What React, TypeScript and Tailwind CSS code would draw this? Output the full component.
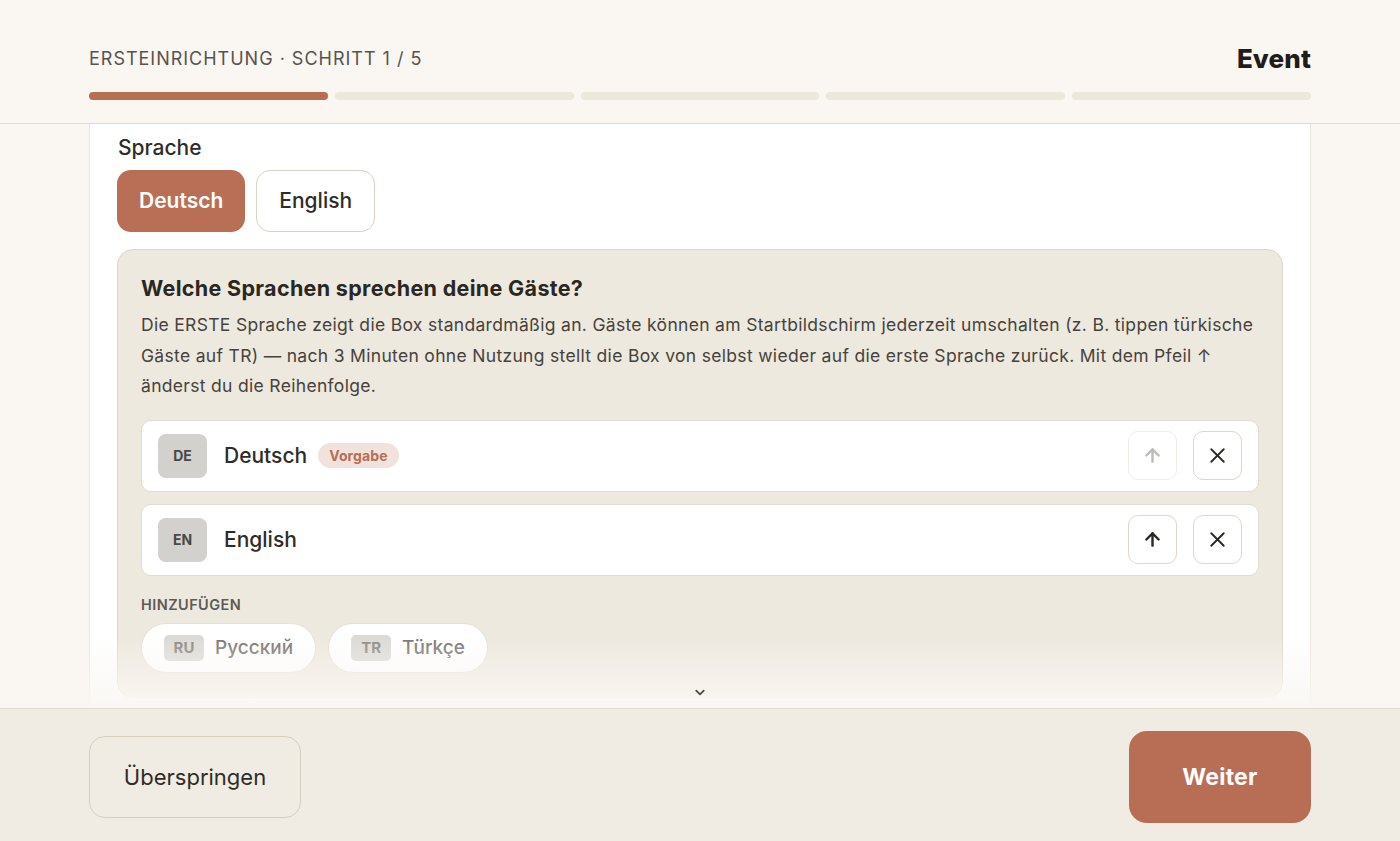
import { ArrowUp, X, ChevronDown } from 'lucide-react'

const STEPS = [true, false, false, false, false]

const ACTIVE = [
  { code: 'DE', name: 'Deutsch', isDefault: true },
  { code: 'EN', name: 'English', isDefault: false },
]

const AVAILABLE = [
  { code: 'RU', name: 'Русский' },
  { code: 'TR', name: 'Türkçe' },
]

export default function App() {
  return (
    <div
      className="flex h-screen flex-col overflow-hidden bg-[#faf7f3] text-[#2b2824]"
      style={{ fontFamily: 'Inter, "Noto Sans", sans-serif' }}
    >
      <header className="h-[124px] shrink-0 border-b border-[#e2dbcf] px-[89px] pt-[44px]">
        <div className="flex h-[28px] items-center justify-between">
          <span className="text-[18px] tracking-[0.055em] text-[#57534d]">
            ERSTEINRICHTUNG · SCHRITT 1 / 5
          </span>
          <span className="text-[26px] font-extrabold tracking-[0.005em] text-[#1f1c19]">
            Event
          </span>
        </div>
        <div className="mt-[20px] flex gap-[7px]">
          {STEPS.map((done, i) => (
            <div
              key={i}
              className={`h-[8px] flex-1 rounded-full ${done ? 'bg-[#b86e55]' : 'bg-[#ede8dd]'}`}
            />
          ))}
        </div>
      </header>

      <main className="relative min-h-0 flex-1 px-[89px]">
        <div className="h-full border-x border-[#ebe5da] bg-white px-[27px] pt-[10px]">
          <div className="pl-[1px] text-[21px] font-medium leading-[28px] text-[#2f2c28]">Sprache</div>
          <div className="mt-[8px] flex gap-[11px]">
            <button className="h-[62px] rounded-[14px] bg-[#b86f56] px-[22px] text-[21px] font-semibold text-white">
              Deutsch
            </button>
            <button className="h-[62px] rounded-[14px] border border-[#d9d2c5] bg-white px-[22px] text-[21px] font-medium text-[#2f2c28]">
              English
            </button>
          </div>

          <section className="mt-[17px] rounded-[16px] border border-[#ddd6c9] bg-[#eee9df] px-[23px] pb-[24px] pt-[24px]">
            <h2 className="text-[21.5px] font-bold leading-[28px] tracking-[0.015em] text-[#2a2723]">
              Welche Sprachen sprechen deine Gäste?
            </h2>
            <p className="mt-[8px] text-[17.5px] leading-[30.5px] tracking-[0.018em] text-[#46423d]">
              Die ERSTE Sprache zeigt die Box standardmäßig an. Gäste können am Startbildschirm
              jederzeit umschalten (z. B. tippen türkische Gäste auf TR) — nach 3 Minuten ohne
              Nutzung stellt die Box von selbst wieder auf die erste Sprache zurück. Mit dem Pfeil ↑
              änderst du die Reihenfolge.
            </p>

            <div className="mt-[18px] flex flex-col gap-[12px]">
              {ACTIVE.map((lang, i) => (
                <div
                  key={lang.code}
                  className="flex h-[72px] items-center rounded-[10px] border border-[#e2dcd0] bg-white pl-[16px] pr-[16px]"
                >
                  <span className="flex h-[44px] w-[49px] items-center justify-center rounded-[8px] bg-[#d3d1ce] text-[14px] font-bold text-[#4a4744]">
                    {lang.code}
                  </span>
                  <span className="ml-[17px] text-[21px] font-medium text-[#2f2c28]">{lang.name}</span>
                  {lang.isDefault && (
                    <span className="ml-[11px] rounded-full bg-[#f1e3dc] px-[11px] py-[2px] text-[14px] font-bold tracking-[0.01em] text-[#b86e55]">
                      Vorgabe
                    </span>
                  )}
                  <div className="ml-auto flex gap-[16px]">
                    <button
                      className={`flex h-[49px] w-[49px] items-center justify-center rounded-[10px] border ${
                        i === 0 ? 'border-[#f0ede8] text-[#bdbab5]' : 'border-[#ddd7cc] text-[#2a2723]'
                      }`}
                    >
                      <ArrowUp size={21} strokeWidth={2.75} />
                    </button>
                    <button className="flex h-[49px] w-[49px] items-center justify-center rounded-[10px] border border-[#ddd7cc] text-[#2a2723]">
                      <X size={25} strokeWidth={1.75} />
                    </button>
                  </div>
                </div>
              ))}
            </div>

            <div className="mt-[18px] text-[14.5px] font-semibold tracking-[0.03em] text-[#5f5a53]">
              HINZUFÜGEN
            </div>
            <div className="mt-[8px] flex gap-[12px]">
              {AVAILABLE.map((lang) => (
                <button
                  key={lang.code}
                  className="flex h-[50px] items-center gap-[11px] rounded-full border border-[#e6e1d7] bg-white pl-[22px] pr-[22px]"
                >
                  <span className="flex h-[26px] w-[40px] items-center justify-center rounded-[5px] bg-[#dcdad6] text-[15px] font-bold text-[#8a8782]">
                    {lang.code}
                  </span>
                  <span className="text-[19px] font-medium text-[#77736d]">{lang.name}</span>
                </button>
              ))}
            </div>
          </section>
        </div>

        <div className="pointer-events-none absolute inset-x-0 bottom-0 h-[72px] bg-gradient-to-b from-[#faf7f3]/0 to-[#faf7f3]" />
        <div className="pointer-events-none absolute bottom-[8px] left-1/2 -translate-x-1/2 text-[#4a4641]">
          <ChevronDown size={15} strokeWidth={2.75} />
        </div>
      </main>

      <footer className="flex h-[133px] shrink-0 items-center justify-between border-t border-[#e2dbcf] bg-[#f1ece3] px-[89px] pt-[4px]">
        <button className="h-[82px] w-[212px] rounded-[16px] border border-[#d6cebf] text-[22px] text-[#2f2c28]">
          Überspringen
        </button>
        <button className="h-[92px] w-[182px] rounded-[18px] bg-[#b86e55] text-[23px] font-bold tracking-[0.01em] text-white">
          Weiter
        </button>
      </footer>
    </div>
  )
}
